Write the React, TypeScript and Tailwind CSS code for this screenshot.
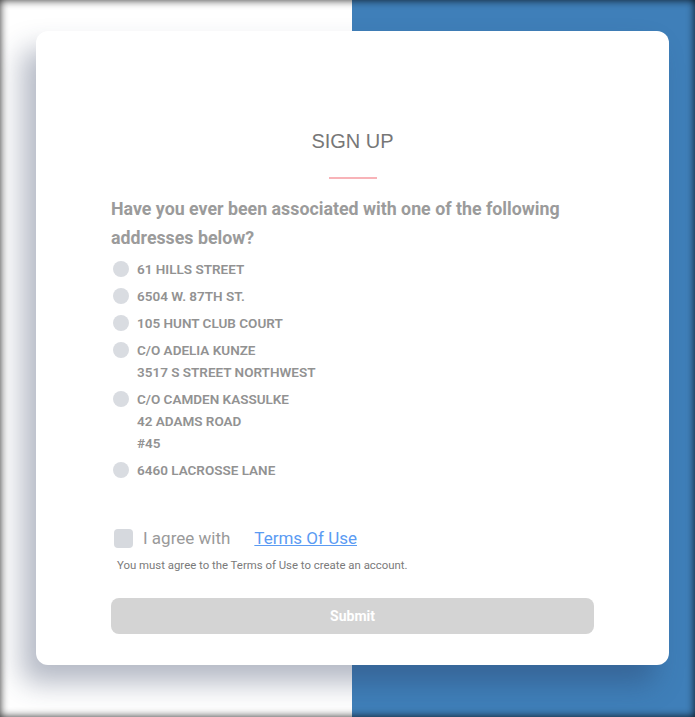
const addresses: string[][] = [
  ['61 HILLS STREET'],
  ['6504 W. 87TH ST.'],
  ['105 HUNT CLUB COURT'],
  ['C/O ADELIA KUNZE', '3517 S STREET NORTHWEST'],
  ['C/O CAMDEN KASSULKE', '42 ADAMS ROAD', '#45'],
  ['6460 LACROSSE LANE'],
]

export default function App() {
  return (
    <div className="relative h-[717px] w-full overflow-hidden bg-[linear-gradient(to_right,#ffffff_50.7%,#3f7fb9_50.7%)] font-['Roboto',sans-serif]">
      <div className="pointer-events-none absolute inset-0 z-10 shadow-[inset_0_0_9px_rgba(0,0,0,0.85)]" />
      <div className="pl-[36px] pr-[26px] pt-[31px]">
        <div className="h-[634px] rounded-xl bg-white px-[75px] pt-[98px] shadow-[-14px_18px_28px_rgba(40,55,90,0.35)]">
          <h1 className="text-center font-['Liberation_Sans',Arial,sans-serif] text-[20px] leading-[24px] text-[#777777]">
            SIGN UP
          </h1>
          <div className="mx-auto mt-[24px] h-[2px] w-[48px] bg-[#f8b3b8]" />
          <p className="mt-[15px] text-[17.8px] font-bold leading-[29px] text-[#9b9b9b]">
            Have you ever been associated with one of the following addresses below?
          </p>
          <ul className="mt-[6px] flex flex-col gap-[5px]">
            {addresses.map((lines) => (
              <li key={lines[0]} className="flex items-start gap-2">
                <span className="ml-[2px] mt-[3px] h-4 w-4 shrink-0 rounded-full bg-[#d9dce1]" />
                <div className="flex flex-col">
                  {lines.map((line) => (
                    <span key={line} className="text-[13.5px] font-semibold leading-[22px] text-[#929292]">
                      {line}
                    </span>
                  ))}
                </div>
              </li>
            ))}
          </ul>
          <div className="mt-[46px] flex items-center">
            <span className="ml-[3px] h-[19px] w-[19px] rounded-[4px] bg-[#d6d9de]" />
            <span className="ml-[10px] text-[17px] leading-[22px] text-[#9a9a9a]">I agree with</span>
            <a href="#" className="ml-[24px] text-[17px] leading-[22px] text-[#5b9bf3] underline">
              Terms Of Use
            </a>
          </div>
          <p className="ml-[6px] mt-[8px] text-[11.4px] leading-[16px] text-[#7a7a7a]">
            You must agree to the Terms of Use to create an account.
          </p>
          <button className="mt-[25px] h-[36px] w-full rounded-lg bg-[#d4d4d4] text-[14px] font-bold text-white">
            Submit
          </button>
        </div>
      </div>
    </div>
  )
}
